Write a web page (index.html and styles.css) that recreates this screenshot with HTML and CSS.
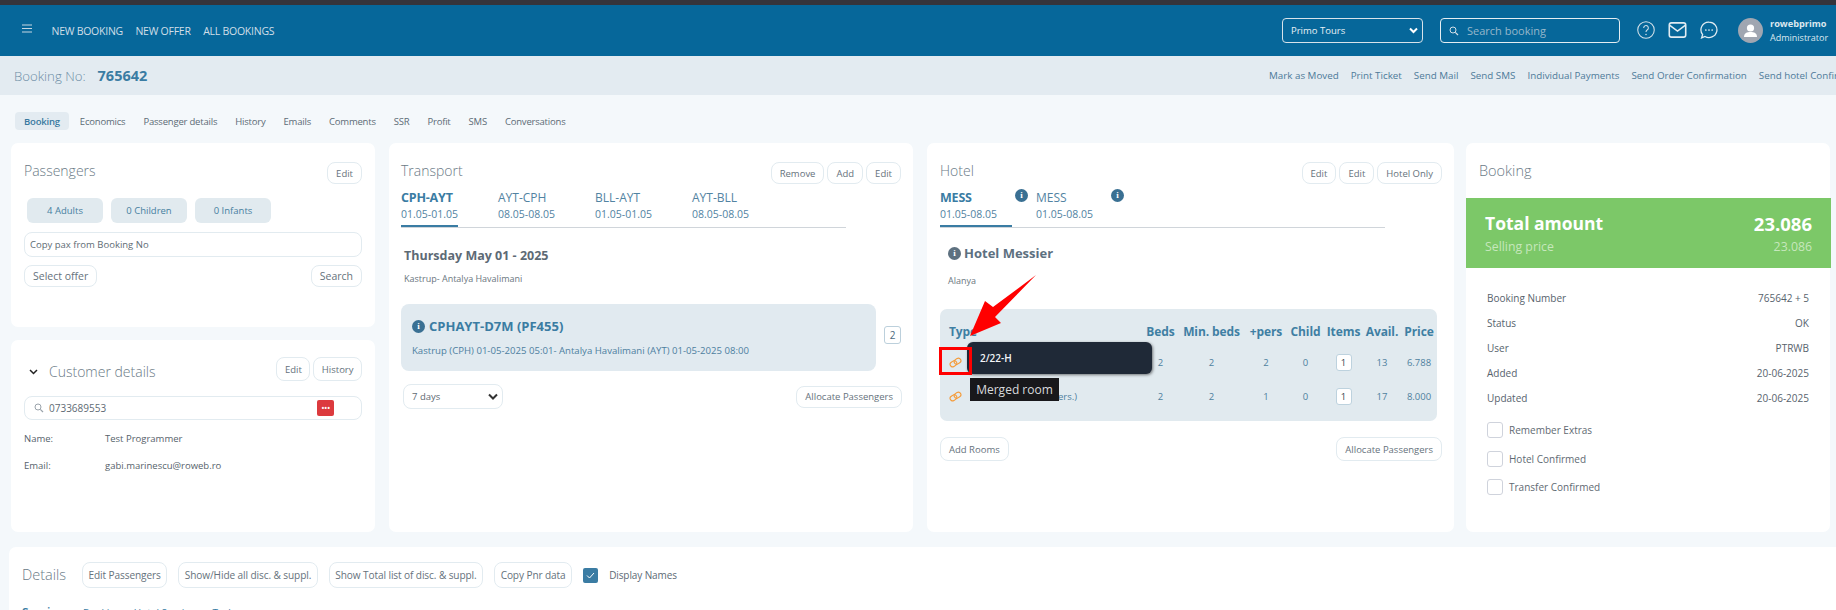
FILE: index.html
```html
<!DOCTYPE html>
<html lang="en">
<head>
<meta charset="utf-8">
<title>Booking 765642</title>
<link rel="stylesheet" href="styles.css">
</head>
<body>
<div class="topstrip"></div>
<header class="nav">
  <svg class="burger" viewBox="0 0 10 9" width="10" height="9"><path d="M0 1h10M0 4.500h10M0 8h10" stroke="#c6d7e2" stroke-width="1.100"/></svg>
  <a>NEW BOOKING</a><a>NEW OFFER</a><a>ALL BOOKINGS</a>
  <div class="nav-right">
    <div class="nav-select"><span>Primo Tours</span><svg width="9" height="7" viewBox="0 0 9 7"><path d="M1 1.500l3.500 3.500L8 1.500" fill="none" stroke="#fff" stroke-width="2"/></svg></div>
    <div class="nav-search"><svg width="10" height="10" viewBox="0 0 10 10"><circle cx="4" cy="4" r="3" fill="none" stroke="#d3dfe7" stroke-width="1"/><path d="M6.300 6.300L9 9" stroke="#d3dfe7" stroke-width="1.200"/></svg><span>Search booking</span></div>
    <div class="nav-icons">
      <svg width="18" height="18" viewBox="0 0 17 17"><circle cx="8.500" cy="8.500" r="7.800" fill="none" stroke="#d5e2ea" stroke-width="1"/><path d="M6.300 6.500a2.200 2.200 0 1 1 3.500 1.800c-.9.600-1.300 1-1.300 2.200" fill="none" stroke="#d5e2ea"/><circle cx="8.500" cy="12.800" r=".7" fill="#d5e2ea"/></svg>
      <svg width="19" height="16" viewBox="0 0 17 15"><rect x=".8" y=".8" width="15.400" height="13.400" rx="2" fill="none" stroke="#e2ecf2" stroke-width="1.500"/><path d="M1 3l7.500 5.500L16 3" fill="none" stroke="#e2ecf2" stroke-width="1.500"/></svg>
      <svg width="18" height="18" viewBox="0 0 17 17"><path d="M8.500 1a7.500 7.300 0 1 1-3.800 13.600L1.500 16l1-3.200A7.300 7.300 0 0 1 8.500 1z" fill="none" stroke="#e2ecf2" stroke-width="1.200"/><circle cx="5.500" cy="8.500" r=".8" fill="#e2ecf2"/><circle cx="8.500" cy="8.500" r=".8" fill="#e2ecf2"/><circle cx="11.500" cy="8.500" r=".8" fill="#e2ecf2"/></svg>
    </div>
    <div class="avatar"><svg width="25" height="25" viewBox="0 0 25 25"><circle cx="12.500" cy="12.500" r="12.500" fill="#a0a6b1"/><circle cx="12.500" cy="10" r="3.600" fill="#fff"/><path d="M6 19c0-4 3-5 6.500-5s6.500 1 6.500 5z" fill="#fff"/></svg></div>
    <div class="who"><b>rowebprimo</b><span>Administrator</span></div>
  </div>
</header>
<div class="subbar">
  <div class="bookno"><span>Booking No:</span><b>765642</b></div>
  <nav class="actions"><a>Mark as Moved</a><a>Print Ticket</a><a>Send Mail</a><a>Send SMS</a><a>Individual Payments</a><a>Send Order Confirmation</a><a>Send hotel Confirmation</a></nav>
</div>
<nav class="tabs"><a class="on">Booking</a><a>Economics</a><a>Passenger details</a><a>History</a><a>Emails</a><a>Comments</a><a>SSR</a><a>Profit</a><a>SMS</a><a>Conversations</a></nav>

<main class="grid">
  <div class="col-left">
    <section class="card pax">
      <div class="head"><h2>Passengers</h2><div class="btns"><button class="btn">Edit</button></div></div>
      <div class="chips"><span>4 Adults</span><span>0 Children</span><span>0 Infants</span></div>
      <div class="field">Copy pax from Booking No</div>
      <div class="split"><button class="btn big">Select offer</button><button class="btn big">Search</button></div>
    </section>
    <section class="card cust">
      <div class="head"><div class="cust-title"><svg width="9" height="6" viewBox="0 0 9 6"><path d="M1 1l3.500 3.500L8 1" fill="none" stroke="#222" stroke-width="1.500"/></svg><h2>Customer details</h2></div><div class="btns"><button class="btn">Edit</button><button class="btn">History</button></div></div>
      <div class="field phone"><svg width="10" height="10" viewBox="0 0 10 10"><circle cx="4" cy="4" r="3" fill="none" stroke="#9aa3ab"/><path d="M6.300 6.300L9 9" stroke="#9aa3ab" stroke-width="1.200"/></svg><span>0733689553</span><i class="dots">•••</i></div>
      <dl class="kv"><dt>Name:</dt><dd>Test Programmer</dd><dt>Email:</dt><dd>gabi.marinescu@roweb.ro</dd></dl>
    </section>
  </div>

  <section class="card transport">
    <div class="head"><h2>Transport</h2><div class="btns"><button class="btn">Remove</button><button class="btn">Add</button><button class="btn">Edit</button></div></div>
    <div class="legs">
      <div class="leg on"><b>CPH-AYT</b><span>01.05-01.05</span></div>
      <div class="leg"><b>AYT-CPH</b><span>08.05-08.05</span></div>
      <div class="leg"><b>BLL-AYT</b><span>01.05-01.05</span></div>
      <div class="leg"><b>AYT-BLL</b><span>08.05-08.05</span></div>
    </div>
    <h3 class="date">Thursday May 01 - 2025</h3>
    <p class="route">Kastrup- Antalya Havalimani</p>
    <div class="flight-row">
      <div class="flight">
        <div class="flight-title"><i class="info">i</i>CPHAYT-D7M (PF455)</div>
        <p>Kastrup (CPH) 01-05-2025 05:01- Antalya Havalimani (AYT) 01-05-2025 08:00</p>
      </div>
      <span class="qty">2</span>
    </div>
    <div class="split tfoot"><div class="days"><span>7 days</span><svg width="10" height="7" viewBox="0 0 10 7"><path d="M1 1.500l4 4 4-4" fill="none" stroke="#333" stroke-width="2"/></svg></div><button class="btn">Allocate Passengers</button></div>
  </section>

  <section class="card hotel">
    <div class="head"><h2>Hotel</h2><div class="btns"><button class="btn">Edit</button><button class="btn">Edit</button><button class="btn">Hotel Only</button></div></div>
    <div class="legs hlegs">
      <div class="leg on"><b>MESS</b><span>01.05-08.05</span><i class="info sm">i</i></div>
      <div class="leg"><b>MESS</b><span>01.05-08.05</span><i class="info sm">i</i></div>
    </div>
    <h3 class="hotel-name"><i class="info grey">i</i>Hotel Messier</h3>
    <p class="route">Alanya</p>
    <div class="rooms">
      <table>
        <thead><tr><th class="t-type">Type</th><th>Beds</th><th>Min. beds</th><th>+pers</th><th>Child</th><th>Items</th><th>Avail.</th><th>Price</th></tr></thead>
        <tbody>
          <tr><td class="t-type"><svg class="link" width="13" height="11" viewBox="0 0 13 11"><g fill="none" stroke="#f59a36" stroke-width="1.100" transform="rotate(-32 6.500 5.500)"><rect x=".6" y="3" width="7" height="5" rx="2.500"/><rect x="5.400" y="3" width="7" height="5" rx="2.500"/></g></svg></td><td>2</td><td>2</td><td>2</td><td>0</td><td><span class="item">1</span></td><td>13</td><td>6.788</td></tr>
          <tr><td class="t-type"><svg class="link" width="13" height="11" viewBox="0 0 13 11"><g fill="none" stroke="#f59a36" stroke-width="1.100" transform="rotate(-32 6.500 5.500)"><rect x=".6" y="3" width="7" height="5" rx="2.500"/><rect x="5.400" y="3" width="7" height="5" rx="2.500"/></g></svg><span class="under">ers.)</span></td><td>2</td><td>2</td><td>1</td><td>0</td><td><span class="item">1</span></td><td>17</td><td>8.000</td></tr>
        </tbody>
      </table>
      <div class="pop">2/22-H</div>
      <div class="tip">Merged room</div>
      <div class="redbox"></div>
      <svg class="arrow" width="66" height="61" viewBox="0 0 66 61"><path d="M66 0L23 32l-8-6L0 61l31-13-6-6z" fill="#f00"/></svg>
    </div>
    <div class="split hfoot"><button class="btn">Add Rooms</button><button class="btn">Allocate Passengers</button></div>
  </section>

  <section class="card booking">
    <h2>Booking</h2>
    <div class="total">
      <div><b>Total amount</b><b class="amt">23.086</b></div>
      <div class="sell"><span>Selling price</span><span>23.086</span></div>
    </div>
    <dl class="facts">
      <div><dt>Booking Number</dt><dd>765642 + 5</dd></div>
      <div><dt>Status</dt><dd>OK</dd></div>
      <div><dt>User</dt><dd>PTRWB</dd></div>
      <div><dt>Added</dt><dd>20-06-2025</dd></div>
      <div><dt>Updated</dt><dd>20-06-2025</dd></div>
    </dl>
    <div class="checks">
      <label><i></i>Remember Extras</label>
      <label><i></i>Hotel Confirmed</label>
      <label><i></i>Transfer Confirmed</label>
    </div>
  </section>
</main>

<section class="card details">
  <div class="d-row">
    <h2>Details</h2>
    <button class="btn tall">Edit Passengers</button>
    <button class="btn tall">Show/Hide all disc. &amp; suppl.</button>
    <button class="btn tall">Show Total list of disc. &amp; suppl.</button>
    <button class="btn tall">Copy Pnr data</button>
    <span class="checked"><svg width="15" height="15" viewBox="0 0 15 15"><rect width="15" height="15" rx="2" fill="#3b7ca3"/><path d="M4 7.500l2.500 2.500L11 5" fill="none" stroke="#fff"/></svg></span>
    <span class="dn">Display Names</span>
  </div>
  <div class="d-tabs"><b>Services</b><a>Booking</a><a>Hotel Services</a><a>Tasks</a></div>
</section>
</body>
</html>
```
FILE: styles.css
```css
* { box-sizing: border-box; }
html, body { margin: 0; height: 610px; overflow: hidden; }
body { width: 1836px; background: #f4f8fb; font-family: "Open Sans", "Noto Sans", sans-serif; font-size: 10px; color: #5d6b78; }
a { display: block; white-space: nowrap; }
h2, h3, p, dl, dd, dt { margin: 0; font-weight: 400; }
i { font-style: normal; }

.topstrip { height: 5px; background: #35343b; }
.nav { height: 51px; background: #06679a; display: flex; align-items: center; padding-left: 22px; color: #d0dfe8; font-size: 10.500px; letter-spacing: -.25px; }
.burger { margin: -4px 19.500px 0 0; }
.nav > a { margin-right: 12.500px; }
.nav-right { margin-left: auto; display: flex; align-items: center; padding-right: 6px; letter-spacing: 0; }
.nav-select { width: 141px; height: 25px; border: 1px solid #d7e3ea; border-radius: 4px; display: flex; align-items: center; justify-content: space-between; padding: 0 4px 0 8px; color: #eaf2f6; font-size: 9.500px; }
.nav-search { width: 180px; height: 25px; margin-left: 17px; border: 1px solid #e4edf2; border-radius: 4px; display: flex; align-items: center; gap: 8px; padding-left: 8px; color: #96b7cb; font-size: 11px; }
.nav-icons { display: flex; align-items: center; gap: 13px; margin: -2px 20px 0 17px; }
.avatar { height: 25px; margin-right: 7px; }
.who { display: flex; flex-direction: column; gap: 2px; color: #dce8ef; font-size: 9px; line-height: 12px; width: 60px; white-space: nowrap; }
.who b { font-size: 9.200px; }

.subbar { height: 39px; background: #e3ebf1; display: flex; align-items: center; padding-left: 14px; overflow: hidden; }
.bookno { flex: 0 0 1255px; display: flex; gap: 12px; align-items: baseline; font-size: 13.200px; color: #6c8da5; }
.bookno span { font-weight: 300; }
.bookno b { color: #3a7ca3; font-size: 14.500px; }
.actions { display: flex; gap: 12px; font-size: 9.800px; color: #4d7a99; flex: none; }

.tabs { display: flex; align-items: center; padding: 17px 0 0 15px; height: 35px; font-size: 9.500px; letter-spacing: -.2px; color: #5c6b76; }
.tabs a { padding: 0 9px; height: 18px; line-height: 19px; }
.tabs a.on { background: #e3ebf1; border-radius: 4px; color: #38799f; font-weight: 600; margin-right: 2px; }

.grid { display: flex; align-items: stretch; height: 389px; margin-top: 13px; padding-left: 11px; }
.card { background: #fff; border-radius: 7px; position: relative; }
.col-left { width: 364px; display: flex; flex-direction: column; gap: 13px; margin-right: 14px; }
.pax { height: 184px; padding: 18px 13px; }
.cust { flex: 1; padding: 17px 13px; }
.transport { width: 524px; padding: 18px 12px; margin-right: 14px; }
.hotel { width: 527px; padding: 18px 12px 18px 13px; margin-right: 12px; }
.booking { width: 364px; }

h2 { font-size: 14px; line-height: 20px; color: #6a7a86; font-weight: 300; }
.head { display: flex; justify-content: space-between; align-items: flex-start; }
.btns { display: flex; gap: 3px; margin-top: 1px; }
.btn { height: 22px; border: 1px solid #e2ebf0; background: #fff; border-radius: 8px; font: 9.500px "Open Sans", sans-serif; color: #66727c; padding: 0 8px; white-space: nowrap; }
.btn.big { font-size: 10.500px; padding: 0 8px; }
.btn.tall { height: 26px; padding: 0 5.500px; font-size: 10.100px; letter-spacing: -.1px; }

.chips { display: flex; gap: 8px; margin: 14px 0 9px 3px; }
.chips span { width: 76px; height: 25px; background: #e1eaef; border-radius: 6px; display: flex; align-items: center; justify-content: center; color: #47809f; font-size: 9.500px; }
.field { height: 25px; border: 1px solid #e2ebf0; border-radius: 8px; display: flex; align-items: center; padding-left: 5px; font-size: 9.500px; color: #606b74; }
.split { display: flex; justify-content: space-between; align-items: center; }
.pax .split { margin-top: 8px; }

.cust-title { display: flex; align-items: center; gap: 11px; padding-left: 5px; margin-top: 5px; }
.cust-title h2 { font-size: 14px; }
.cust .btns { margin-top: 0; }
.cust .btn { height: 24px; padding: 0 7.500px; }
.phone { margin-top: 14px; height: 24px; padding-left: 9px; gap: 5px; font-size: 10px; }
.dots { margin-left: auto; margin-right: 27px; width: 17px; height: 16px; background: #dc3a3e; border-radius: 2px; color: #fff; font-size: 9px; line-height: 16px; text-align: center; letter-spacing: -.5px; }
.kv { display: grid; grid-template-columns: 81px 1fr; row-gap: 13px; margin-top: 12px; line-height: 14px; font-size: 9.500px; color: #56626b; }

.legs { display: flex; align-items: flex-end; border-bottom: 1px solid #d0d5da; width: 445px; height: 38px; margin-top: 6px; }
.leg { width: 97px; height: 37px; color: #5283a2; position: relative; }
.leg b { display: block; font-weight: 400; font-size: 12px; line-height: 16px; }
.leg span { display: inline-block; font-size: 10.500px; line-height: 16px; height: 21px; white-space: nowrap; vertical-align: top; }
.leg.on b { color: #3a7ca3; font-weight: 700; font-size: 12.500px; letter-spacing: -.2px; }
.leg.on span { border-bottom: 2px solid #3a7ca3; }
.date { font-size: 12.500px; font-weight: 700; color: #5d6a75; margin: 19px 0 0 3px; line-height: 18px; }
.route { font-size: 9px; color: #6b7780; margin: 7px 0 0 3px; line-height: 14px; }
.flight-row { display: flex; align-items: center; gap: 8px; margin-top: 18px; }
.flight { width: 475px; height: 67px; background: #e1eaf0; border-radius: 8px; padding: 13px 11px; }
.flight-title { display: flex; align-items: center; gap: 4px; font-size: 13px; font-weight: 700; color: #3a7ca3; line-height: 18px; }
.flight p { font-size: 9.600px; color: #4d7fa0; margin-top: 9px; line-height: 14px; }
.info { width: 13px; height: 13px; border-radius: 50%; background: #3a7093; color: #fff; font-size: 9px; font-weight: 700; line-height: 13px; text-align: center; display: inline-block; flex: none; font-family: "Liberation Serif", serif; }
.qty { width: 17px; height: 18px; margin-top: -6px; border: 1px solid #bcd0dc; border-radius: 3px; text-align: center; line-height: 16px; font-size: 10px; color: #4d6a7e; }
.tfoot { margin: 13px -1px 0 2px; }
.tfoot .btn { padding: 0 8px; }
.days { width: 100px; height: 25px; border: 1px solid #e2ebf0; border-radius: 8px; display: flex; align-items: center; justify-content: space-between; padding: 0 4px 0 8px; font-size: 9.500px; color: #5e6a73; }

.hlegs .leg { width: 72px; margin-right: 24px; }
.hlegs .info.sm { position: absolute; left: 75px; top: -1px; }
.hlegs .leg span { display: block; }
.hotel-name { display: flex; align-items: center; gap: 3px; font-size: 13px; font-weight: 700; color: #5d7080; margin: 16px 0 0 8px; line-height: 18px; }
.info.grey { background: #5e7180; }
.hotel .route { margin: 12px 0 0 8px; }
.rooms { position: relative; height: 112px; margin: 21px 5px 0 0; background: #e1eaef; border-radius: 7px; }
table { width: 100%; border-collapse: collapse; table-layout: fixed; font-size: 9.500px; color: #4e7f9e; text-align: center; }
th { font-size: 12px; font-weight: 700; color: #3f7fa3; height: 37px; padding: 7px 0 0; white-space: nowrap; letter-spacing: -.1px; }
td { padding: 0; height: 36px; }
th.t-type, td.t-type { text-align: left; padding-left: 9px; width: 203px; }
th:nth-child(2) { width: 35px; } th:nth-child(3) { width: 67px; } th:nth-child(4) { width: 42px; }
th:nth-child(5) { width: 37px; } th:nth-child(6) { width: 39px; } th:nth-child(7) { width: 38px; } th:nth-child(8) { width: 36px; }
tbody tr:first-child td { height: 32px; }
.link { vertical-align: middle; }
.under { margin-left: 96px; color: #4e7f9e; }
.item { display: inline-block; width: 16px; height: 17px; background: #fff; border: 1px solid #bdd2de; border-radius: 3px; line-height: 15px; color: #3a4650; }
.pop { position: absolute; left: 27px; top: 33px; width: 185px; height: 32px; background: #1f2937; border-radius: 6px; color: #f2f5f7; font-size: 10px; font-weight: 600; line-height: 32px; padding-left: 13px; box-shadow: 1px 1px 3px rgba(0,0,0,.5); }
.tip { position: absolute; left: 30px; top: 69px; width: 89px; height: 23px; background: #18181b; color: #d8dadc; font-size: 12px; line-height: 23px; text-align: center; }
.redbox { position: absolute; left: -1px; top: 38px; width: 33px; height: 28px; border: 3px solid #f00; }
.arrow { position: absolute; left: 30px; top: -34px; }
.hfoot { margin-top: 16px; }
.hfoot .btn { height: 24px; padding: 0 8px; }

.booking h2 { padding: 18px 13px 0; height: 55px; line-height: 20px; font-size: 14.500px; }
.total { height: 70px; margin-right: -1px; background: #7cc868; padding: 16px 19px 0; color: #fff; }
.total div { display: flex; justify-content: space-between; }
.total b { font-size: 17.500px; line-height: 19px; }
.total .amt { font-size: 18.500px; }
.total .sell { font-size: 12.300px; line-height: 21px; color: #c6e7bc; margin-top: 3px; }
.facts { padding: 23px 21px 0; color: #57636d; font-size: 10px; }
.facts div { display: flex; justify-content: space-between; height: 25px; line-height: 15px; }
.checks { display: flex; flex-direction: column; gap: 12.500px; margin: 6px 0 0 21px; }
.checks label { display: flex; align-items: center; gap: 6px; height: 16px; color: #5f6a73; font-size: 10px; }
.checks i { width: 16px; height: 16px; border: 1px solid #cfd3dc; border-radius: 3px; background: #fff; }

.details { margin: 15px 0 0 9px; height: 63px; padding: 15px 13px; overflow: hidden; border-radius: 7px 0 0 0; }
.d-row { display: flex; align-items: center; gap: 11px; }
.d-row h2 { font-size: 14.500px; width: 49px; }
.checked { display: flex; }
.dn { font-size: 10px; color: #5d6a75; letter-spacing: -.1px; }
.d-tabs { display: flex; gap: 13px; margin-top: 16px; font-size: 10px; color: #3a7ca3; align-items: baseline; }
.d-tabs b { width: 48px; font-size: 12px; font-weight: 600; }
```
